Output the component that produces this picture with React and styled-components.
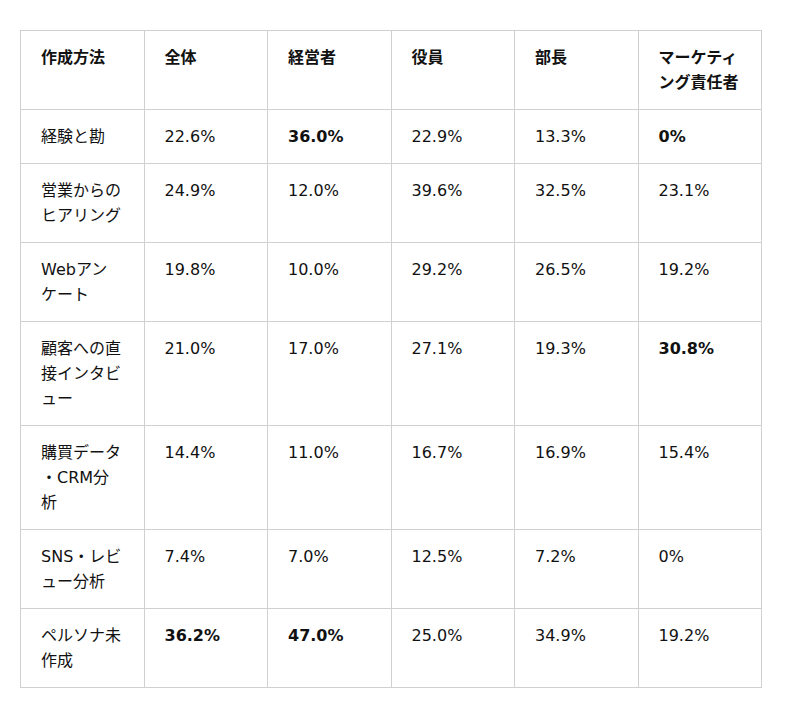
import React from "react";
import styled, { createGlobalStyle } from "styled-components";

const Global = createGlobalStyle`
  html, body { margin: 0; padding: 0; background: #fff; }
  body { font-family: "DejaVu Sans", "Noto Sans CJK JP", sans-serif; color: #111; }
`;

const Page = styled.div`
  padding: 30px 20px;
`;

const Table = styled.table`
  width: 742px;
  table-layout: fixed;
  border-collapse: collapse;
  font-size: 16px;
  line-height: 25px;
`;

const cell = `
  border: 1px solid #d0d0d0;
  padding: 14px 21.5px 14px 20px;
  text-align: left;
  vertical-align: top;
  line-break: anywhere;
`;

const Th = styled.th`
  ${cell}
  font-weight: 700;
`;

const Td = styled.td`
  ${cell}
  font-weight: ${(p) => (p.$bold ? 700 : 400)};
`;

const headers = ["作成方法", "全体", "経営者", "役員", "部長", "マーケティング責任者"];

const rows = [
  ["経験と勘", "22.6%", "*36.0%", "22.9%", "13.3%", "*0%"],
  ["営業からのヒアリング", "24.9%", "12.0%", "39.6%", "32.5%", "23.1%"],
  ["Webアンケート", "19.8%", "10.0%", "29.2%", "26.5%", "19.2%"],
  ["顧客への直接インタビュー", "21.0%", "17.0%", "27.1%", "19.3%", "*30.8%"],
  ["購買データ・CRM分析", "14.4%", "11.0%", "16.7%", "16.9%", "15.4%"],
  ["SNS・レビュー分析", "7.4%", "7.0%", "12.5%", "7.2%", "0%"],
  ["ペルソナ未作成", "*36.2%", "*47.0%", "25.0%", "34.9%", "19.2%"],
];

export default function App() {
  return (
    <>
      <Global />
      <Page>
        <Table>
          <thead>
            <tr>
              {headers.map((h) => (
                <Th key={h}>{h}</Th>
              ))}
            </tr>
          </thead>
          <tbody>
            {rows.map((r, i) => (
              <tr key={i}>
                {r.map((c, j) => {
                  const bold = c.startsWith("*");
                  return (
                    <Td key={j} $bold={bold}>
                      {bold ? c.slice(1) : c}
                    </Td>
                  );
                })}
              </tr>
            ))}
          </tbody>
        </Table>
      </Page>
    </>
  );
}
